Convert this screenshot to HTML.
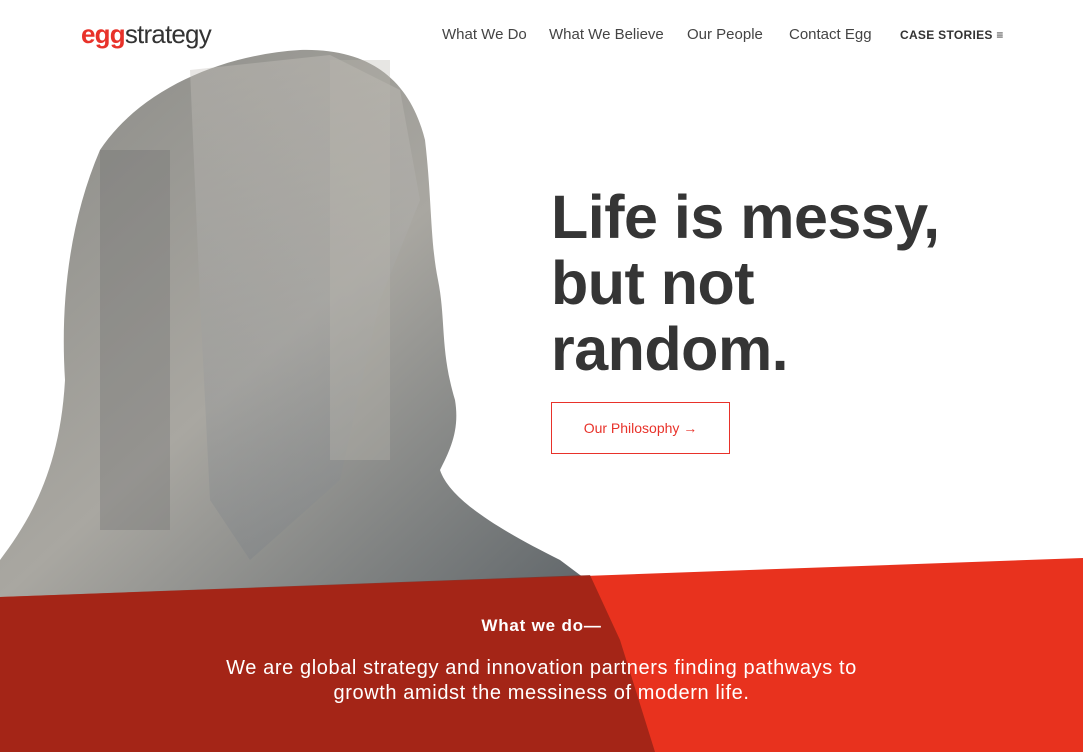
<!DOCTYPE html>
<html><head><meta charset="utf-8"><style>
body{margin:0;width:1083px;height:752px;overflow:hidden;background:#fff;font-family:"Liberation Sans",sans-serif;position:relative}
.logo{position:absolute;left:81px;top:19px;font-size:26px;letter-spacing:-0.8px;color:#333}
.logo b{color:#e8322a}
nav{position:absolute;top:26px;font-size:15px;color:#444}
nav span{position:absolute;white-space:nowrap}
.cs{position:absolute;left:900px;top:28px;font-size:12px;font-weight:bold;color:#333;letter-spacing:.3px}
h1{position:absolute;left:551px;top:184px;margin:0;font-size:61px;line-height:66px;color:#353535;font-weight:bold;letter-spacing:-0.5px}
.btn{position:absolute;left:551px;top:402px;width:177px;height:50px;border:1px solid #e8322a;color:#e8322a;font-size:14px;text-align:center;line-height:50px}
svg{position:absolute;left:0;top:0}
.wwd{position:absolute;top:616px;left:0;width:1083px;text-align:center;color:#fff;font-weight:bold;font-size:17px;letter-spacing:.8px}
.p{position:absolute;top:656px;left:0;width:1083px;text-align:center;color:#fff;font-size:20px;line-height:25px;letter-spacing:.6px}
</style></head><body>
<svg width="1083" height="752">
<defs>
<linearGradient id="g" x1="0" y1="0" x2="1" y2="1"><stop offset="0" stop-color="#8a8a86"/><stop offset=".5" stop-color="#a9a7a1"/><stop offset="1" stop-color="#5e6468"/></linearGradient>
<linearGradient id="g2" x1="0" y1="0" x2="0" y2="1"><stop offset="0" stop-color="#c7c3bd"/><stop offset="1" stop-color="#7d8287"/></linearGradient>
</defs>
<path d="M0 600 L0 560 C30 520 60 470 65 380 C60 300 70 220 100 150 C140 90 220 55 300 50 C370 48 410 80 425 140 C432 200 430 240 438 280 C446 320 440 350 455 400 C460 430 450 450 440 470 C450 500 500 530 560 560 L600 590 Z" fill="url(#g)"/>
<path d="M190 70 L330 55 L400 90 L420 200 L380 300 L340 480 L250 560 L210 500 L200 300 Z" fill="url(#g2)" opacity=".4"/>
<rect x="330" y="60" width="60" height="400" fill="#b9b6b0" opacity=".35"/>
<rect x="100" y="150" width="70" height="380" fill="#6f716f" opacity=".35"/>
<polygon points="0,597 1083,558 1083,752 0,752" fill="#e8321e"/>
<path d="M0 597 L590 575 L620 640 L655 752 L0 752 Z" fill="#8d2216" opacity=".75"/>
</svg>
<div class="logo"><b>egg</b>strategy</div>
<nav><span style="left:442px">What We Do</span><span style="left:549px">What We Believe</span><span style="left:687px">Our People</span><span style="left:789px">Contact Egg</span></nav>
<div class="cs">CASE STORIES <span style="font-weight:normal">&#8801;</span></div>
<h1>Life is messy,<br>but not<br>random.</h1>
<div class="btn">Our Philosophy →</div>
<div class="wwd">What we do—</div>
<div class="p">We are global strategy and innovation partners finding pathways to<br>growth amidst the messiness of modern life.</div>
</body></html>
